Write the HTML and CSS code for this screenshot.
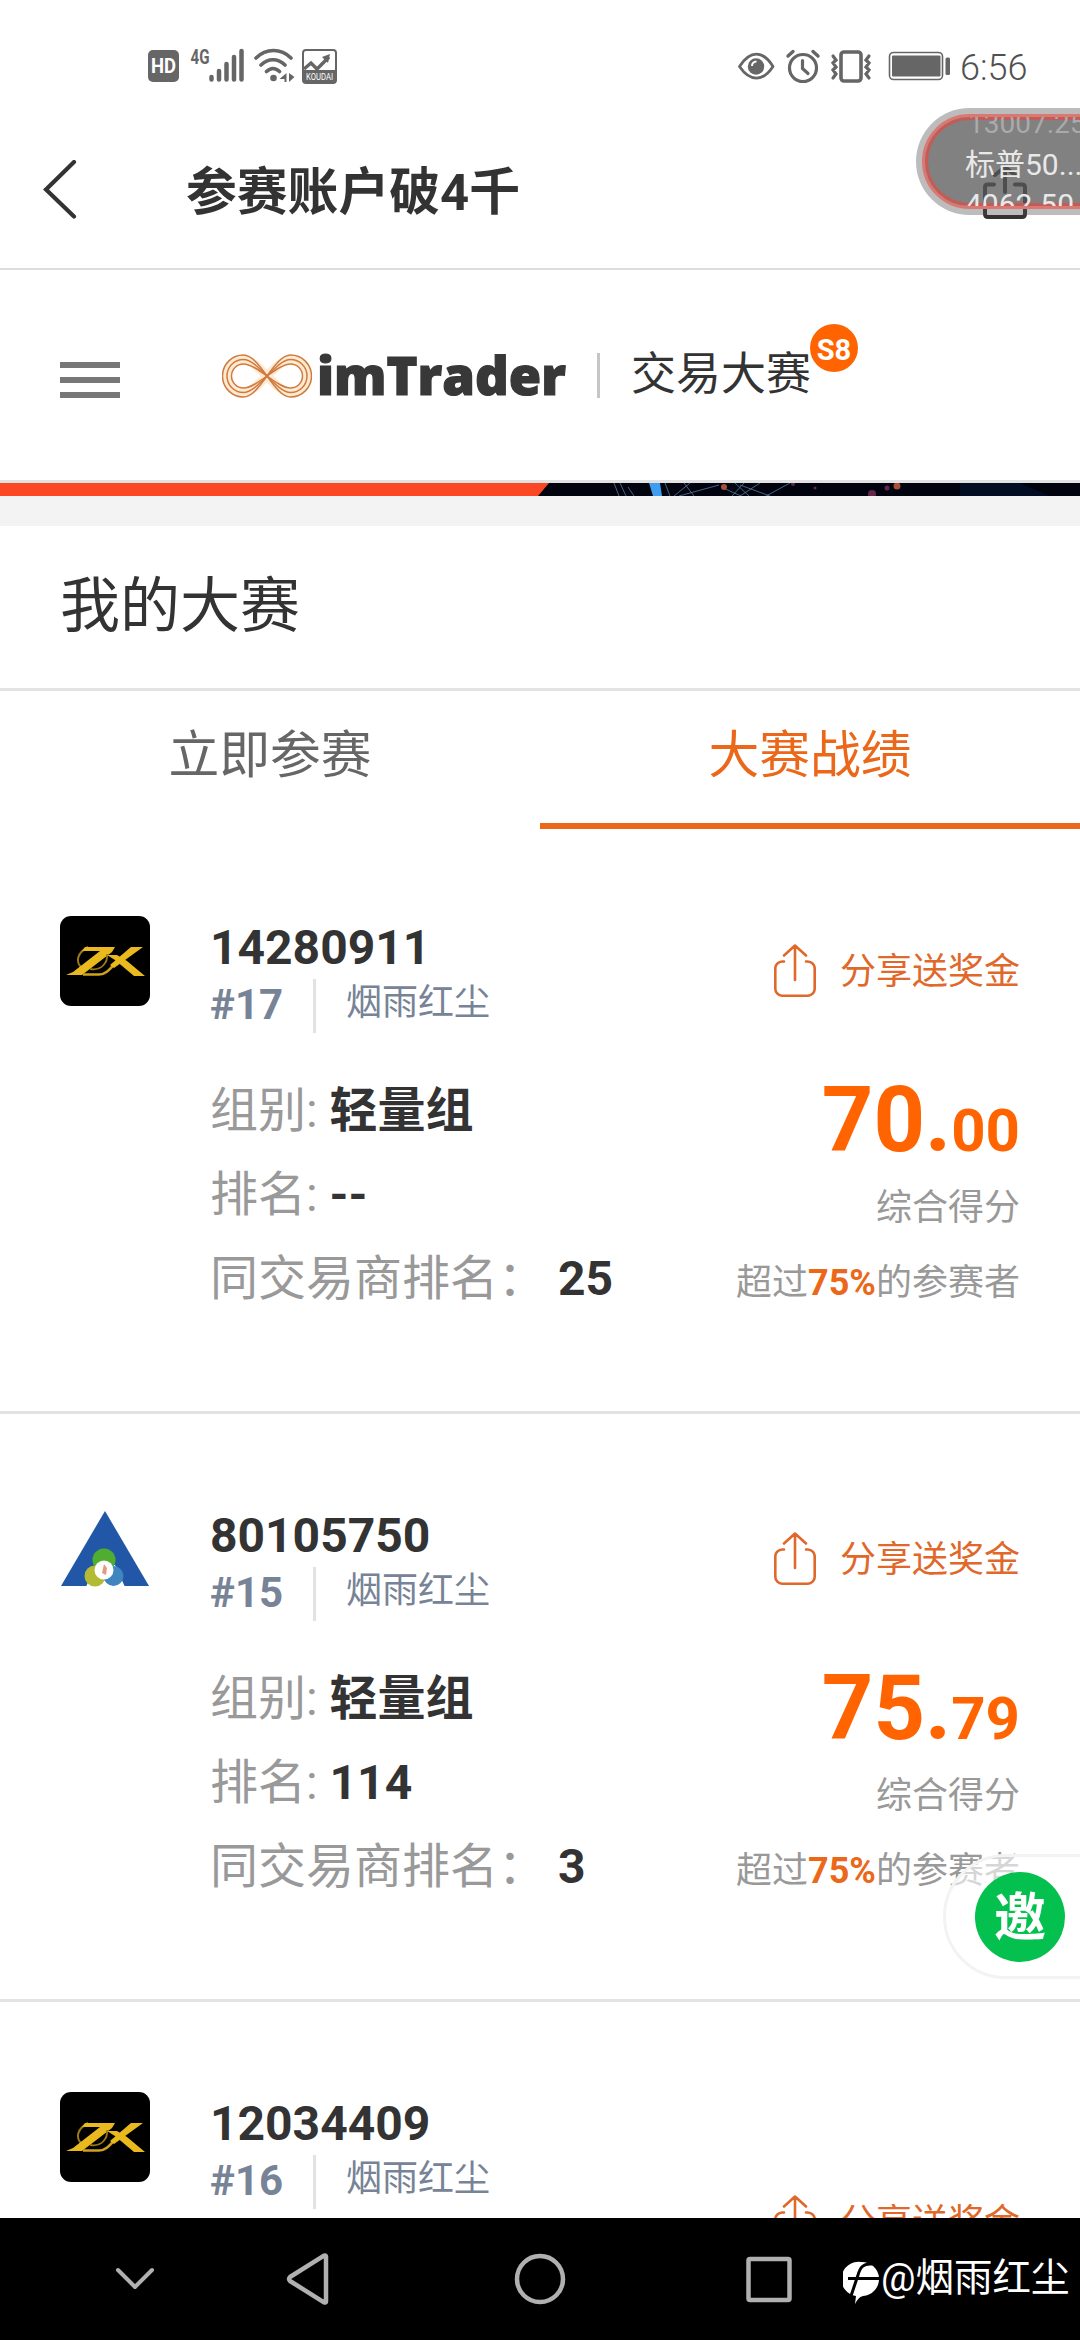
FILE: index.html
```html
<!DOCTYPE html>
<html lang="zh-CN">
<head>
<meta charset="utf-8">
<title>参赛账户破4千</title>
<link rel="stylesheet" href="styles.css">
</head>
<body>
<svg class="defs" width="0" height="0">
  <symbol id="share" viewBox="0 0 42 53">
    <path d="M10 17.500H8.500A7 7 0 0 0 1.300 25v19.500a7 7 0 0 0 7.200 7.200h25a7 7 0 0 0 7.200-7.200V25a7 7 0 0 0-7.200-7.500H32M21 36V1.800M10 11.500l11-10 11 10" fill="none" stroke="currentColor" stroke-width="2.600" stroke-linecap="round" stroke-linejoin="round"/>
  </symbol>
  <symbol id="zx" viewBox="0 0 90 90">
    <rect width="90" height="90" rx="11" fill="#000"/>
    <path d="M28 31c-11 6-13 15-6 21" fill="none" stroke="#9a7a16" stroke-width="2"/>
    <path d="M25 31h30l-3 5-30 23H6l7-3 27-21H22z" fill="#e9b91e"/>
    <path d="M23 58.500h16c9 0 14-10 21-16l12-10" fill="none" stroke="#cfa41c" stroke-width="2.500"/>
    <path d="M30 53c12 2 18-7 17-15" fill="none" stroke="#9a7a16" stroke-width="1.800"/>
    <path d="M71 31h12L61 47l-7 5-4-3z" fill="#e9b91e"/>
    <path d="M47 39h10l10 6 18 15H74L55 44z" fill="#e9b91e"/>
  </symbol>
</svg>
<div class="screen">
  <div class="statusbar">
    <svg class="status-left" viewBox="0 0 190 36" width="190" height="36">
      <rect x="0" y="2" width="31" height="32" rx="5" fill="#666"/>
      <text x="15.500" y="25" class="st-hd" text-anchor="middle" textLength="25" lengthAdjust="spacingAndGlyphs">HD</text>
      <text x="42.500" y="15.500" class="st-4g" textLength="19" lengthAdjust="spacingAndGlyphs">4G</text>
      <g stroke="#666" stroke-width="4.500" stroke-linecap="round"><path d="M63.500 29v2.500M71 23v8.500M78.500 16v15.500M86 9v22.500M93.500 3v28.500"/></g>
      <g fill="none" stroke="#666" stroke-width="3.600" stroke-linecap="round"><path d="M108 10c10-10 25-10 35 0M113 17c7-7 17-7 24 0M118.500 23.500c4-4 9-4 13 0"/></g>
      <circle cx="125.500" cy="30" r="3.300" fill="#666"/>
      <path d="M138.500 25v9h-2v-3h-5zM141 25l5.500 4-5.500 5z" fill="#666"/>
      <rect x="155" y="2" width="33" height="33" rx="3" fill="#fff" stroke="#666" stroke-width="2"/>
      <path d="M155 22h33v11q0 2-2 2h-29q-2 0-2-2z" fill="#666"/>
      <path d="M156 21l7-6 6 6 12-12" fill="none" stroke="#666" stroke-width="3.400"/><path d="M174 9l8-3-2 9z" fill="#666"/>
      <text x="171.500" y="32" class="st-kd" text-anchor="middle" textLength="27" lengthAdjust="spacingAndGlyphs">KOUDAI</text>
    </svg>
    <div class="status-right">
      <svg viewBox="0 0 214 36" width="214" height="36">
        <g fill="none" stroke="#666">
          <path d="M1.500 18.500C12 2 25 2 35 18.500 25 34 12 34 1.500 18.500z" stroke-width="2.800" stroke-linejoin="round"/>
          <circle cx="65" cy="20" r="13.500" stroke-width="3.200"/>
          <path d="M64.500 12.500v8l5.500 5" stroke-width="3.200" stroke-linecap="round"/>
          <path d="M50 8l5-4.500M80 8l-5-4.500" stroke-width="3.400" stroke-linecap="round"/>
          <rect x="103" y="4" width="20" height="29" rx="3" stroke-width="3.600"/>
          <path d="M95 8l3 4-3 3 3 4-3 3 3 4-3 4M131 8l-3 4 3 3-3 4 3 3-3 4 3 4" stroke-width="3.200" stroke-linecap="round"/>
          <rect x="151.500" y="4.500" width="53" height="27" rx="4" stroke-width="1.600"/>
        </g>
        <circle cx="18" cy="18.500" r="8.200" fill="#666"/><path d="M14 18a4.500 4.500 0 0 1 4.500-4.500" fill="none" stroke="#fff" stroke-width="2"/>
        <rect x="154" y="7.500" width="48.500" height="21" rx="1" fill="#666"/><rect x="207.500" y="9.500" width="4.500" height="17.500" rx="1.500" fill="#666"/>
      </svg>
      <span class="clock">6:56</span>
    </div>
  </div>
  <header class="titlebar">
    <svg class="back" viewBox="0 0 34 60" width="34" height="60"><path d="M31 2L3 29.500l28 27" fill="none" stroke="#333" stroke-width="4.200" stroke-linecap="round"/></svg>
    <h1>参赛账户破4千</h1>
    <svg class="title-share" viewBox="0 0 44 56" width="44" height="56"><path d="M11 20.500H4.500q-2.500 0-2.500 3V50q0 3 3 3h34q3 0 3-3V23.500q0-3-3-3H32M22 28V4M12 11l10-8 10 8" fill="none" stroke="#333" stroke-width="4" stroke-linecap="round"/></svg>
  </header>
  <div class="brandbar">
    <div class="menu"><i></i><i></i><i></i></div>
    <svg class="infinity" viewBox="0 0 90 44" width="90" height="44">
      <g fill="none" stroke="#fdebd0" stroke-width="9"><path d="M21.500 5.500a16.500 16.500 0 0 0 0 33C36 38.500 54 5.500 68.500 5.500a16.500 16.500 0 0 1 0 33C54 38.500 36 5.500 21.500 5.500z"/></g>
      <g fill="none" stroke="#d07a42" stroke-width="1.500">
        <path d="M21.500 1a21 21 0 0 0 0 42C38 43 52 1 68.500 1a21 21 0 0 1 0 42C52 43 38 1 21.500 1z"/>
        <path d="M21.500 5.500a16.500 16.500 0 0 0 0 33C36 38.500 54 5.500 68.500 5.500a16.500 16.500 0 0 1 0 33C54 38.500 36 5.500 21.500 5.500z"/>
        <path d="M21.500 10a12 12 0 0 0 0 24C35 34 55 10 68.500 10a12 12 0 0 1 0 24C55 34 35 10 21.500 10z"/>
      </g>
    </svg>
    <span class="wordmark">imTrader</span>
    <span class="rule"></span>
    <span class="contest">交易大赛</span>
    <span class="season">S8</span>
  </div>
  <svg class="banner" viewBox="0 0 1080 13" width="1080" height="13">
    <rect width="1080" height="13" fill="#01040f"/>
    <path d="M0 0h549l-11 13H0z" fill="#fc4725"/>
    <path d="M649 0h11l2 13h-9z" fill="#3f9df0"/>
    <path d="M614 0l5 13M620 0l6 13M628 4l6 9M665 0l5 13M690 0l-16 13M684 0l10 13M719 2l-40 11M721 4l20 9M735 0l14 13M744 0l-12 13M760 0l-20 13M740 2l30 11M790 0l-24 13" stroke="#587d9f" stroke-width=".8" fill="none"/>
    <g fill="#a7503a"><circle cx="724" cy="4" r="3"/><circle cx="897" cy="3" r="3.500"/></g>
    <g fill="#63264d"><circle cx="793" cy="1" r="2"/><circle cx="815" cy="5" r="1.500"/><circle cx="872" cy="11" r="4"/><circle cx="887" cy="5" r="2.500"/></g>
    <path d="M960 0h60l30 13h-90z" fill="#020c22"/>
  </svg>
  <div class="gap"></div>
  <h2>我的大赛</h2>
  <nav class="tabs"><span>立即参赛</span><span class="active">大赛战绩</span></nav>
  <main class="list">
    <article class="card">
      <svg class="logo"><use href="#zx"/></svg>
      <div class="account">
        <div class="number">14280911</div>
        <div class="owner"><b>#17</b><i></i><span>烟雨红尘</span></div>
        <p>组别: <b>轻量组</b></p><p>排名: <b>--</b></p><p>同交易商排名： <b>25</b></p>
      </div>
      <div class="result">
        <div class="share"><svg><use href="#share"/></svg>分享送奖金</div>
        <div class="score">70.<small>00</small></div>
        <div class="note">综合得分</div>
        <div class="note beat">超过<b>75%</b>的参赛者</div>
      </div>
    </article>
    <article class="card">
      <svg class="logo" viewBox="0 0 90 90">
        <path d="M45 7L89 82H1z" fill="#2257a8"/><path d="M26 83l9-22h20l10 22z" fill="#fff"/>
        <circle cx="44" cy="56" r="11.500" fill="#4fae2f"/><circle cx="35" cy="72" r="10.500" fill="#b3bb35"/><circle cx="53.500" cy="72" r="10" fill="#3e86bd"/>
        <circle cx="44" cy="66" r="9.500" fill="#fff"/><path d="M44 60l3 4-1 7-4-2z" fill="#e49a7d"/>
      </svg>
      <div class="account">
        <div class="number">80105750</div>
        <div class="owner"><b>#15</b><i></i><span>烟雨红尘</span></div>
        <p>组别: <b>轻量组</b></p><p>排名: <b>114</b></p><p>同交易商排名： <b>3</b></p>
      </div>
      <div class="result">
        <div class="share"><svg><use href="#share"/></svg>分享送奖金</div>
        <div class="score">75.<small>79</small></div>
        <div class="note">综合得分</div>
        <div class="note beat">超过<b>75%</b>的参赛者</div>
      </div>
    </article>
    <article class="card">
      <svg class="logo"><use href="#zx"/></svg>
      <div class="account">
        <div class="number">12034409</div>
        <div class="owner"><b>#16</b><i></i><span>烟雨红尘</span></div>
      </div>
      <div class="result result-low">
        <div class="share"><svg><use href="#share"/></svg>分享送奖金</div>
      </div>
    </article>
  </main>
  <footer class="navbar">
    <svg viewBox="0 0 800 122" width="800" height="122">
      <g fill="none" stroke="#b0b0b0" stroke-linejoin="round" stroke-linecap="round">
        <path d="M118 52l17 17 17-17" stroke-width="4"/>
        <path d="M326 38.500v45q0 1.500-2 .8L290 63q-2-2 0-4l34-21.300q2-.7 2 .8z" stroke-width="4.500"/>
        <circle cx="540" cy="61" r="23" stroke-width="4.500"/>
        <rect x="748.500" y="41" width="41" height="41" rx="1.500" stroke-width="4.500"/>
      </g>
    </svg>
    <div class="signature">
      <svg viewBox="0 0 36 44" width="36" height="44"><path d="M18 1a17 17 0 0 1 2 34c-4 1-6 4-8 8l1-8A17 17 0 0 1 18 1z" fill="#fff"/><path d="M29 3c-9-1-12 4-14 11L8 35M5 17.500h31" fill="none" stroke="#000" stroke-width="3"/></svg><span class="at">@</span><span>烟雨红尘</span>
    </div>
  </footer>
  <div class="ticker"><div class="ticker-in"><div class="t1">13007.25</div><div class="t2">标普50...</div><div class="t3">4062.50</div></div></div>
  <div class="invite"><span>邀</span></div>
</div>
</body>
</html>
```

FILE: styles.css
```css
* { box-sizing: border-box; margin: 0; padding: 0; }
body { background: #fff; }
.defs { display: block; }
.screen {
  position: relative; width: 1080px; height: 2340px; overflow: hidden;
  display: flex; flex-direction: column; background: #fff; color: #333;
  font-family: Roboto, "Noto Sans CJK SC", sans-serif;
}
.screen > * { flex-shrink: 0; }
i, b { font-style: normal; }

.statusbar { height: 132px; padding: 48px 0 0 148px; display: flex; justify-content: space-between; align-items: flex-start; }
.status-right { display: flex; width: 342px; }
.st-hd { font: bold 20px Roboto, sans-serif; fill: #fff; }
.st-4g { font: bold 20px Roboto, sans-serif; fill: #666; }
.st-kd { font: 9px Roboto, sans-serif; fill: #fff; }
.clock { font-size: 36px; line-height: 40px; font-weight: 300; color: #505050; margin-left: 8px; }

.titlebar { height: 138px; display: flex; align-items: center; padding: 0 53px 20px 43px; border-bottom: 2px solid #dcdcdc; }
.titlebar h1 { font-size: 50.800px; line-height: 60px; margin: 6px auto 0 109px; }
.titlebar .title-share { margin-top: 4px; }

.brandbar { height: 213px; display: flex; align-items: flex-start; border-bottom: 3px solid #e2e2e2; padding-left: 60px; }
.menu { width: 60px; margin-top: 92px; display: flex; flex-direction: column; gap: 9px; }
.menu i { height: 6px; background: #777; }
.infinity { margin: 84px 0 0 102px; }
.wordmark { width: 250px; margin: 69px 0 0 5px; font: 800 52.500px/71px "Open Sans", sans-serif; color: #383838; -webkit-text-stroke: 1.200px #383838; white-space: nowrap; }
.rule { width: 3px; height: 45px; margin: 83px 0 0 30px; background: #c6c6c6; }
.contest { font-size: 45px; line-height: 60px; margin: 75px 0 0 31px; }
.season { width: 48px; height: 48px; margin: 54px 0 0 -1px; border-radius: 50%; background: #ff6400; color: #fff; font: bold 29px/52px Roboto, sans-serif; text-align: center; }

.banner { display: block; }
.gap { height: 30px; background: #f3f3f3; }
h2 { height: 165px; padding-left: 60px; font-size: 60px; font-weight: 400; line-height: 162px; border-bottom: 3px solid #e3e3e3; }
.tabs { height: 138px; display: flex; }
.tabs span { flex: 1; text-align: center; font-size: 50.800px; line-height: 130px; color: #666; border-bottom: 6px solid transparent; }
.tabs .active { color: #eb681a; border-color: #eb681a; }

.list { flex: 1 1 0; min-height: 0; overflow: hidden; margin-top: -3px; }
.card { height: 588px; padding: 90px 60px 0; border-bottom: 3px solid #e3e3e3; display: flex; align-items: flex-start; }
.logo { width: 90px; height: 90px; margin-right: 60px; }
.account { flex: 1; }
.number { font-size: 48px; font-weight: 700; line-height: 63px; }
.owner { height: 54px; display: flex; margin-bottom: 36px; color: #778396; font-size: 36px; line-height: 49px; }
.owner b { font-size: 42px; line-height: 51px; width: 103px; }
.owner i { width: 3px; height: 54px; background: #e2e2e2; margin-right: 30px; }
.account p { font-size: 48px; line-height: 84px; color: #999; white-space: nowrap; }
.account p b { color: #333; }
.result { text-align: right; padding-top: 28px; white-space: nowrap; font-size: 36px; }
.result-low { padding-top: 103px; }
.share { display: flex; justify-content: flex-end; align-items: center; color: #e0682a; height: 56px; line-height: 58px; }
.share span { display: block; }
.share svg { width: 42px; height: 53px; margin: -3px 24px 0 0; }
.score { margin-top: 68px; font-size: 90px; line-height: 106px; font-weight: 700; color: #ff6400; }
.score small { font-size: 60px; }
.score + .note { margin-top: -13px; }
.note { line-height: 75px; color: #999; }
.beat b { color: #eb681a; }

.navbar { height: 122px; background: #000; display: flex; }
.signature { display: flex; padding-left: 43px; color: #fff; font-size: 38.500px; line-height: 119px; white-space: nowrap; }
.signature svg { margin: 43px 2px 0 0; }

.ticker { position: absolute; left: 916px; top: 108px; width: 220px; height: 107px; border-radius: 54px; background: rgba(80,80,80,.38); padding: 6px; }
.ticker-in { height: 95px; border: 3px solid #d87973; box-shadow: inset 0 0 0 3px #c55b56; border-radius: 48px; background: rgba(90,90,90,.6); overflow: hidden; color: #e8e8e8; font-size: 30px; padding: 3px 0 0 40px; }
.ticker-in div { white-space: nowrap; line-height: 43px; }
.ticker-in .t1 { color: #aaa; font-size: 28px; margin: -18px 0 -2px 3px; }
.ticker-in .t3 { margin-top: -3px; }
.invite { position: absolute; left: 943px; top: 1854px; width: 200px; height: 125px; border: 3px solid #f3f3f3; border-radius: 63px; background: rgba(255,255,255,.6); padding: 15px 29px; }
.invite span { display: block; width: 90px; height: 90px; border-radius: 50%; background: #04c04f; color: #fff; font-size: 52px; font-weight: 700; line-height: 94px; text-align: center; }
```
